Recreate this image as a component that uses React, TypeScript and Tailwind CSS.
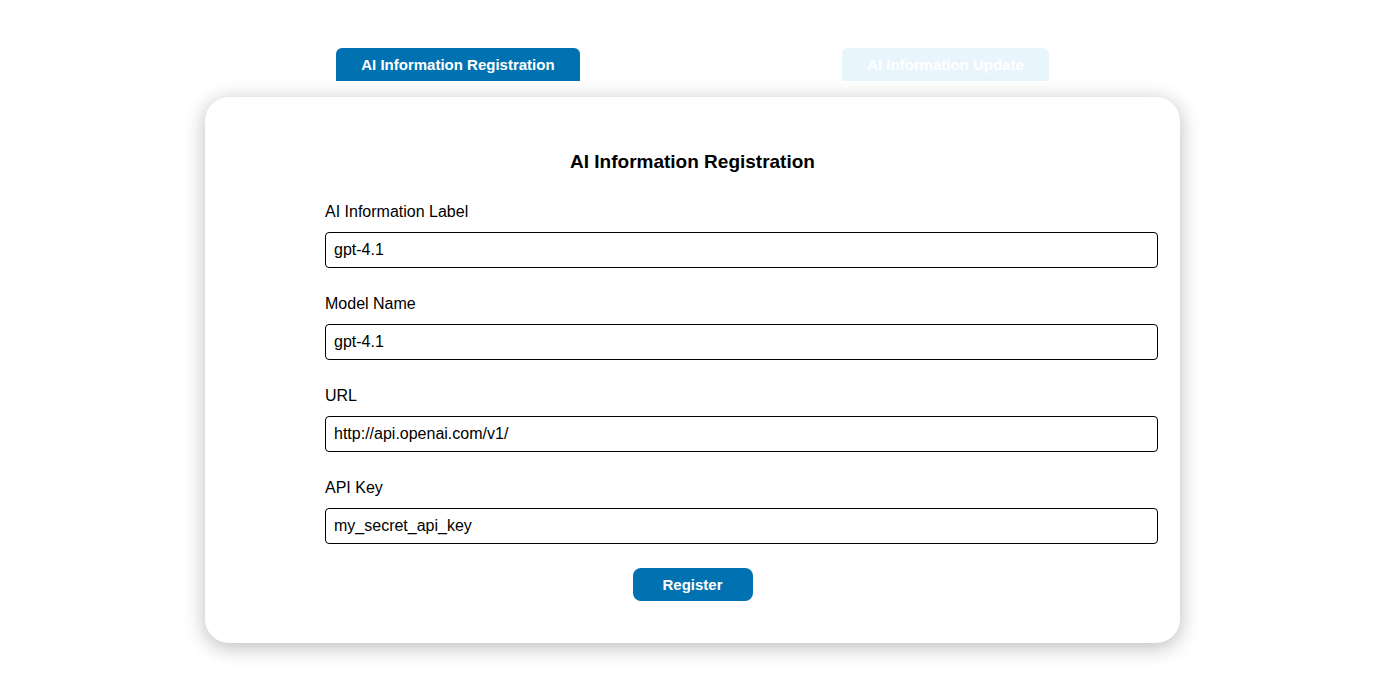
import { useState } from "react";

const fields = [
  { id: "label", label: "AI Information Label", value: "gpt-4.1" },
  { id: "model", label: "Model Name", value: "gpt-4.1" },
  { id: "url", label: "URL", value: "http://api.openai.com/v1/" },
  { id: "key", label: "API Key", value: "my_secret_api_key" },
];

const tabs = ["AI Information Registration", "AI Information Update"];

export default function App() {
  const [active, setActive] = useState(0);

  return (
    <div className="flex min-h-screen flex-col items-center bg-white pt-12 pr-[3px] font-['Liberation_Sans',Arial,sans-serif] text-base text-black">
      <nav className="flex w-[975px] max-w-full justify-around">
        {tabs.map((tab, i) => (
          <button
            key={tab}
            type="button"
            onClick={() => setActive(i)}
            className={
              i === active
                ? "h-[33px] rounded-t-md bg-[#0072b2] px-[25px] pt-px text-[15px] font-bold text-white"
                : "h-[33px] rounded-t-md bg-[#e9f5fc] px-[25px] pt-px text-[15px] font-bold text-white"
            }
          >
            {tab}
          </button>
        ))}
      </nav>

      <main className="mt-4 w-[975px] max-w-full rounded-3xl bg-white pt-[54px] pb-[42px] shadow-[0_4px_20px_rgba(35,24,21,0.3)]">
        <form onSubmit={(e) => e.preventDefault()} className="flex flex-col items-center">
          <h1 className="text-[19px] leading-[22px] font-bold">AI Information Registration</h1>
          <div className="mt-[27px] flex w-full flex-col gap-6 pr-[22px] pl-[120px]">
            {fields.map((f) => (
              <div key={f.id} className="flex flex-col gap-2">
                <label htmlFor={f.id} className="leading-6">
                  {f.label}
                </label>
                <input
                  id={f.id}
                  type="text"
                  defaultValue={f.value}
                  className="h-9 w-full rounded-[4px] border border-black bg-white px-2"
                />
              </div>
            ))}
          </div>
          <button
            type="submit"
            className="mt-6 h-[33px] w-[120px] rounded-lg bg-[#0072b2] pt-px text-[15px] font-bold text-white"
          >
            Register
          </button>
        </form>
      </main>
    </div>
  );
}
